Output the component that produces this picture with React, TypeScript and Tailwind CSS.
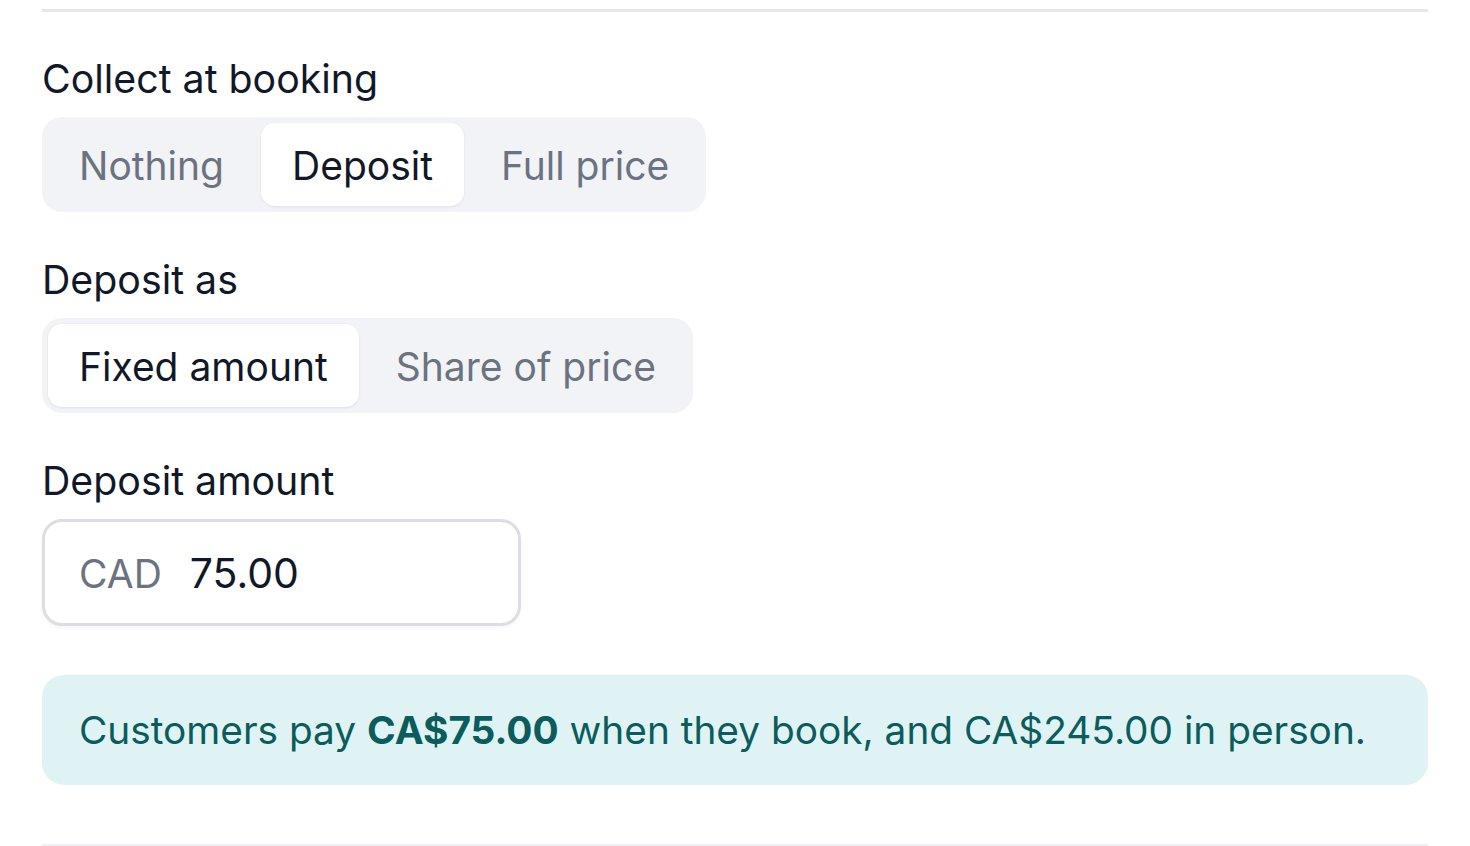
import React, { useState } from 'react'

const font = { fontFamily: 'Inter, "Liberation Sans", sans-serif' }

interface SegmentedProps {
  options: string[]
  value: string
  onChange: (v: string) => void
}

function Segmented({ options, value, onChange }: SegmentedProps) {
  return (
    <div className="inline-flex gap-[6px] rounded-[20px] bg-[#f2f3f6] p-[6px]">
      {options.map((opt) => {
        const active = opt === value
        return (
          <button
            key={opt}
            onClick={() => onChange(opt)}
            className={`flex h-[83px] items-center rounded-[14px] px-[31px] pt-[2px] text-[39px] leading-[46px] ${
              active
                ? 'bg-white text-[#111827] shadow-[0_1px_3px_rgba(0,0,0,0.08)]'
                : 'text-[#6b7280]'
            }`}
          >
            {opt}
          </button>
        )
      })}
    </div>
  )
}

export default function App() {
  const [collect, setCollect] = useState('Deposit')
  const [depositAs, setDepositAs] = useState('Fixed amount')
  const [amount, setAmount] = useState('75.00')

  return (
    <div className="min-h-screen bg-white px-[42px] pt-[9px]" style={font}>
      <div className="border-t-[3px] border-[#e5e7eb]" />

      <div className="pt-[44px]">
        <div className="text-[39.3px] leading-[46px] text-[#111827]">Collect at booking</div>
        <div className="mt-[15px]">
          <Segmented options={['Nothing', 'Deposit', 'Full price']} value={collect} onChange={setCollect} />
        </div>

        <div className="mt-[45px] text-[39.3px] leading-[46px] text-[#111827]">Deposit as</div>
        <div className="mt-[15px]">
          <Segmented options={['Fixed amount', 'Share of price']} value={depositAs} onChange={setDepositAs} />
        </div>

        <div className="mt-[45px] text-[39.3px] leading-[46px] text-[#111827]">Deposit amount</div>
        <div className="mt-[15px] flex h-[107px] w-[479px] items-center rounded-[20px] border-[3px] border-[#dcdee3] bg-white pl-[34px] pt-[3px] shadow-[0_2px_4px_rgba(0,0,0,0.04)]">
          <span className="text-[39px] text-[#6b7280]">CAD</span>
          <input
            value={amount}
            onChange={(e) => setAmount(e.target.value)}
            className="ml-[28px] w-[260px] bg-transparent text-[41px] text-[#111827] outline-none"
          />
        </div>

        <div className="mt-[49px] flex h-[110px] items-center rounded-[22px] bg-[#dff3f4] px-[37px] text-[38.8px] text-[#0b5c5a]">
          <p>
            Customers pay <span className="font-bold">CA$75.00</span> when they book, and CA$245.00 in person.
          </p>
        </div>

        <div className="mt-[59px] border-t-[2px] border-[#eef0f2]" />
      </div>
    </div>
  )
}
